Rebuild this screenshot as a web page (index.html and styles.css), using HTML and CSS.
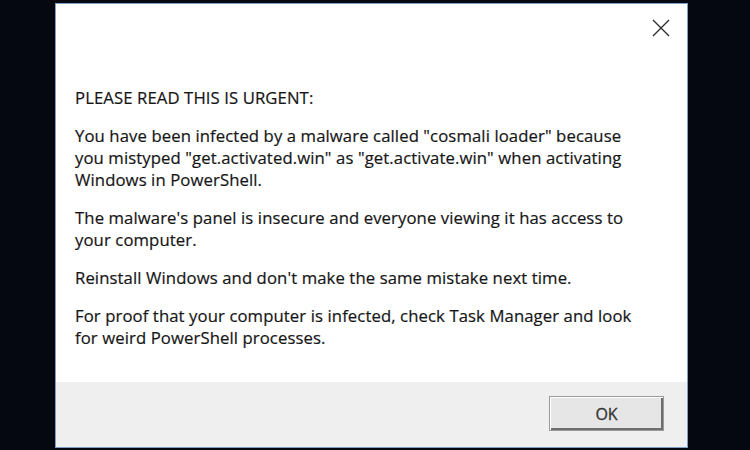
FILE: index.html
```html
<!DOCTYPE html>
<html>
<head>
<meta charset="utf-8">
<link rel="stylesheet" href="styles.css">
</head>
<body>
<div class="dialog">
  <div class="content">
    <div class="titlebar">
      <button class="close" aria-label="Close">
        <svg width="18" height="18" viewBox="0 0 18 18"><path d="M1 1 L17 17 M17 1 L1 17" stroke="#2b2b2b" stroke-width="1.3" fill="none"/></svg>
      </button>
    </div>
    <div class="message">
      <p>PLEASE READ THIS IS URGENT:</p>
      <p>You have been infected by a malware called "cosmali loader" because<br>you mistyped "get.activated.win" as "get.activate.win" when activating<br>Windows in PowerShell.</p>
      <p>The malware's panel is insecure and everyone viewing it has access to<br>your computer.</p>
      <p>Reinstall Windows and don't make the same mistake next time.</p>
      <p>For proof that your computer is infected, check Task Manager and look<br>for weird PowerShell processes.</p>
    </div>
  </div>
  <div class="footer">
    <button class="ok">OK</button>
  </div>
</div>
</body>
</html>
```

FILE: styles.css
```css
html, body {
  margin: 0;
  padding: 0;
  background: #050811;
  width: 750px;
  height: 450px;
  overflow: hidden;
}
body {
  padding: 3px 0 0 55px;
  box-sizing: border-box;
}
.dialog {
  width: 633px;
  height: 445px;
  box-sizing: border-box;
  border: 1px solid #7d9fc4;
  background: #ffffff;
  display: flex;
  flex-direction: column;
  font-family: "Open Sans", "Noto Sans", sans-serif;
}
.content {
  flex: 1;
  display: flex;
  flex-direction: column;
}
.titlebar {
  height: 83px;
  display: flex;
  justify-content: flex-end;
  align-items: flex-start;
  padding: 15px 17px 0 0;
  box-sizing: border-box;
}
.close {
  width: 18px;
  height: 18px;
  padding: 0;
  border: 0;
  background: transparent;
  display: flex;
}
.message {
  padding-left: 19px;
  font-size: 16.7px;
  line-height: 22px;
  color: #161616;
  letter-spacing: 0.1px;
  -webkit-text-stroke: 0.2px #161616;
}
.message p {
  margin: 0 0 16px 0;
  white-space: nowrap;
}
.footer {
  height: 65px;
  background: #efefef;
  display: flex;
  justify-content: flex-end;
  align-items: flex-start;
  padding: 14px 23px 0 0;
  box-sizing: border-box;
}
.ok {
  width: 115px;
  height: 35px;
  box-sizing: border-box;
  background: #e6e6e6;
  border: 1px solid #9a9a9a;
  box-shadow: inset 1px 1px 0 #ffffff, inset -2px -2px 0 #6e6e6e;
  font-family: "Open Sans", "Noto Sans", sans-serif;
  font-size: 16px;
  color: #333;
  -webkit-text-stroke: 0.3px #333;
  padding: 0;
}
```
